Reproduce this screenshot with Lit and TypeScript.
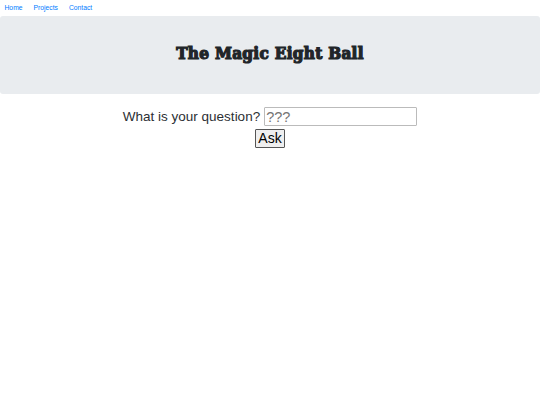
import { LitElement, html, css } from "lit";
import { customElement } from "lit/decorators.js";

@customElement("app-root")
export class AppRoot extends LitElement {
  static styles = css`
    :host {
      display: block;
      width: 540px;
      height: 405px;
      background: #fff;
      color: #212529;
      font-family: "Liberation Sans", Arial, sans-serif;
      overflow: hidden;
    }
    .nav {
      display: flex;
      gap: 11px;
      height: 15px;
      margin-bottom: 1px;
      align-items: center;
      padding: 0 4.5px;
      box-sizing: border-box;
      font-size: 6.75px;
    }
    .nav a {
      color: #007bff;
      text-decoration: none;
    }
    .jumbo {
      height: 78px;
      background: #e9ecef;
      border-radius: 3px;
      display: flex;
      align-items: center;
      justify-content: center;
    }
    h1 {
      margin: 0 0 3px;
      font-family: "DejaVu Serif", serif;
      font-stretch: condensed;
      font-weight: 700;
      font-size: 17px;
      letter-spacing: 0.3px;
      color: #212529;
      -webkit-text-stroke: 1.2px #212529;
      line-height: 1;
    }
    form {
      display: flex;
      flex-direction: column;
      align-items: center;
      margin-top: 13px;
      gap: 3px;
    }
    .row {
      display: flex;
      align-items: center;
      gap: 4px;
      font-size: 13.5px;
      line-height: 18px;
      color: #2b2f33;
    }
    input {
      width: 153px;
      height: 19px;
      box-sizing: border-box;
      border: 1px solid #bbb;
      border-radius: 1px;
      padding: 0 1px;
      margin: 0;
      font: 14.5px "Liberation Sans", Arial, sans-serif;
      outline: none;
    }
    input::placeholder {
      color: #757575;
    }
    button {
      width: 30px;
      height: 19px;
      padding: 0 0 1px;
      box-sizing: border-box;
      border: 1px solid #555;
      border-radius: 1px;
      background: #efefef;
      color: #000;
      font: 14px "Liberation Sans", Arial, sans-serif;
    }
  `;

  render() {
    return html`
      <nav class="nav">
        <a href="#">Home</a>
        <a href="#">Projects</a>
        <a href="#">Contact</a>
      </nav>
      <header class="jumbo"><h1>The Magic Eight Ball</h1></header>
      <form @submit=${(e: Event) => e.preventDefault()}>
        <div class="row">
          <label for="q">What is your question?</label>
          <input id="q" placeholder="???" />
        </div>
        <button type="submit">Ask</button>
      </form>
    `;
  }
}
